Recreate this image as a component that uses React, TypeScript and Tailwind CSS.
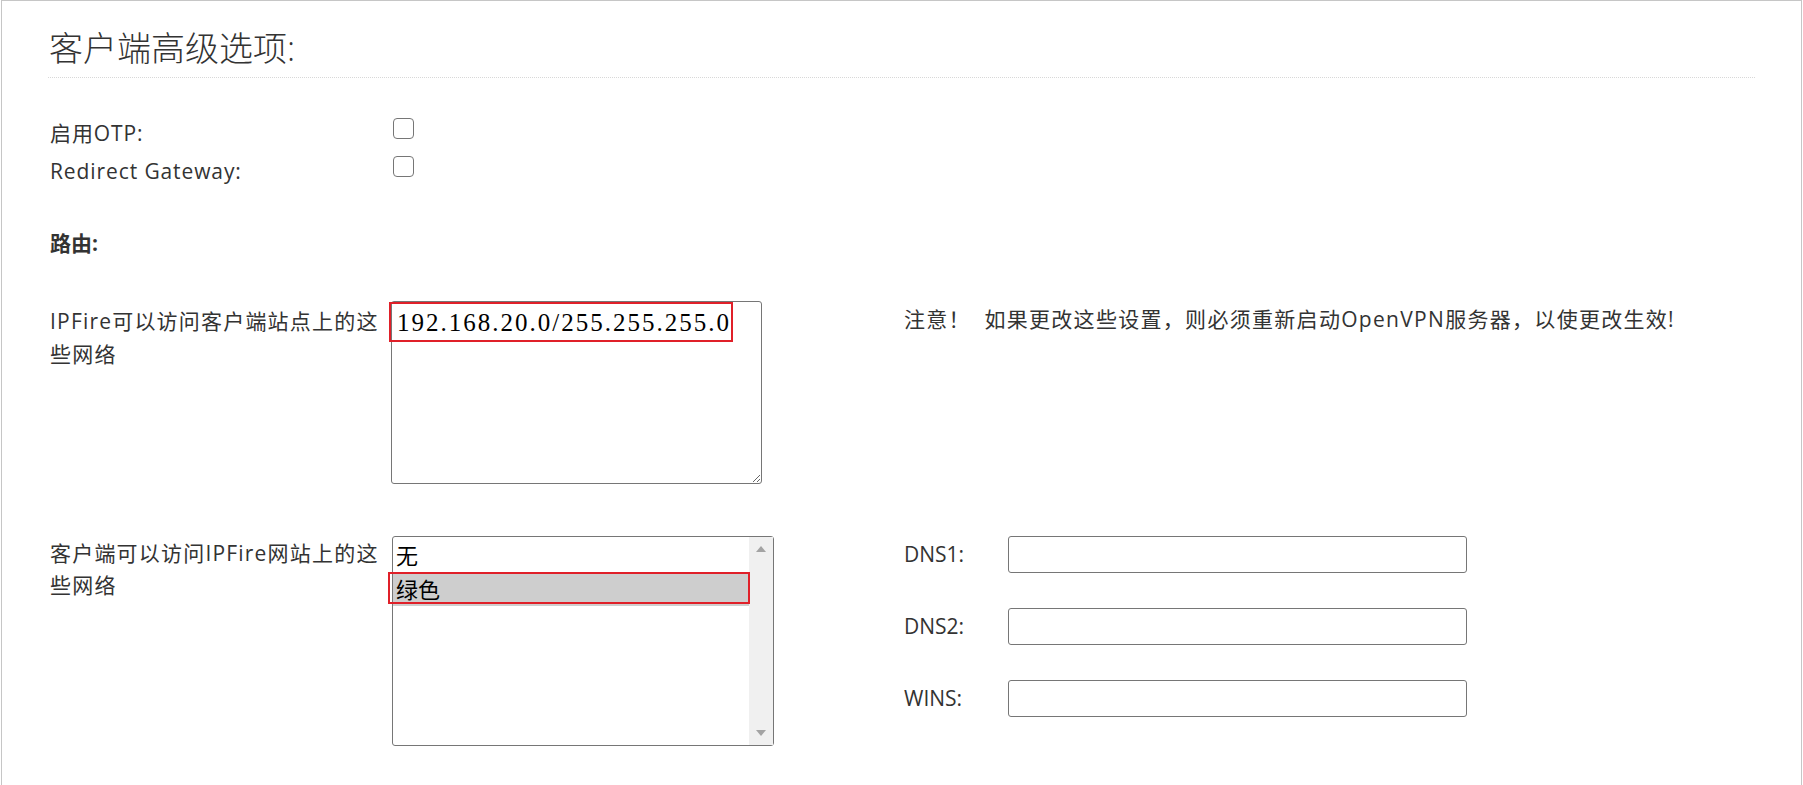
import React from 'react';

const font = { fontFamily: '"Open Sans", "Noto Sans CJK SC", sans-serif' };

const Checkbox = () => (
  <input
    type="checkbox"
    readOnly
    className="appearance-none w-[21px] h-[21px] mt-[4px] border-[1.5px] border-[#767676] rounded-[4px] bg-white"
  />
);

const TextInput = () => (
  <input type="text" className="w-[459px] h-[37px] border border-[#767676] rounded-[3px] bg-white" />
);

export default function App() {
  return (
    <div className="pl-px bg-white min-h-[785px]" style={font}>
      <div className="w-[1801px] min-h-[830px] border border-[#c6c6c6] px-[46px] text-[#333]">
        <div className="pt-[27px] pb-[8px] border-b border-dotted border-[#d8d8d8]">
          <h1 className="text-[34px] leading-[41px] font-light text-[#333] pl-px">客户端高级选项:</h1>
        </div>

        <div className="pt-[36px] text-[21px]">
          <div className="flex h-[38px] items-start">
            <div className="w-[345px] pl-[2px] leading-[38px] tracking-[0.9px]">启用OTP:</div>
            <Checkbox />
          </div>
          <div className="flex h-[38px] items-start">
            <div className="w-[345px] pl-[2px] leading-[38px] tracking-[0.9px]">Redirect Gateway:</div>
            <Checkbox />
          </div>

          <div className="mt-[34px] h-[38px] leading-[38px] font-bold pl-[2px]">路由:</div>

          <div className="mt-[39px] flex items-start">
            <div className="w-[343px] pl-[2px] pt-[4px] leading-[33px] tracking-[1.2px]">
              IPFire可以访问客户端站点上的这
              <br />
              些网络
            </div>
            <div className="relative w-[371px] h-[183px]">
              <textarea
                readOnly
                value="192.168.20.0/255.255.255.0"
                className="block w-full h-full border border-[#767676] rounded-[3px] pl-[5px] pt-[6px] text-[25px] leading-[30px] tracking-[2px] text-black bg-white"
                style={{ fontFamily: '"Liberation Serif", serif' }}
              />
              <div className="absolute left-[-2px] top-[1px] w-[344px] h-[40px] border-2 border-[#e02029] pointer-events-none" />
            </div>
            <div className="ml-[142px] pt-[2px] leading-[33px] tracking-[1.3px]">注意！&nbsp; 如果更改这些设置，则必须重新启动OpenVPN服务器，以使更改生效!</div>
          </div>

          <div className="mt-[52px] flex items-start">
            <div className="w-[344px] pl-[2px] pt-[1px] leading-[32px] tracking-[1.2px]">
              客户端可以访问IPFire网站上的这
              <br />
              些网络
            </div>
            <div className="relative w-[382px] h-[210px] border border-[#767676] rounded-[3px] bg-white flex">
              <div className="flex-1 text-[22px] text-black" style={{ fontFamily: '"Noto Sans CJK SC", sans-serif' }}>
                <div className="h-[35px] leading-[35px] pl-[3px]">无</div>
                <div className="h-[34px] leading-[32px] pl-[3px] bg-[#cecece]">绿色</div>
              </div>
              <div className="w-[24px] bg-[#f0f0f0] flex flex-col justify-between items-center py-[9px]">
                <svg width="10" height="6" viewBox="0 0 10 6"><path d="M0 6 L5 0 L10 6 Z" fill="#a3a3a3" /></svg>
                <svg width="10" height="6" viewBox="0 0 10 6"><path d="M0 0 L5 6 L10 0 Z" fill="#a3a3a3" /></svg>
              </div>
              <div className="absolute left-[-5px] top-[35px] w-[362px] h-[32px] border-2 border-[#e02029] pointer-events-none" />
            </div>
            <div className="ml-[130px] flex flex-col gap-[35px]">
              <div className="flex items-center">
                <div className="w-[104px]">DNS1:</div>
                <TextInput />
              </div>
              <div className="flex items-center">
                <div className="w-[104px]">DNS2:</div>
                <TextInput />
              </div>
              <div className="flex items-center">
                <div className="w-[104px]">WINS:</div>
                <TextInput />
              </div>
            </div>
          </div>
        </div>
      </div>
    </div>
  );
}
